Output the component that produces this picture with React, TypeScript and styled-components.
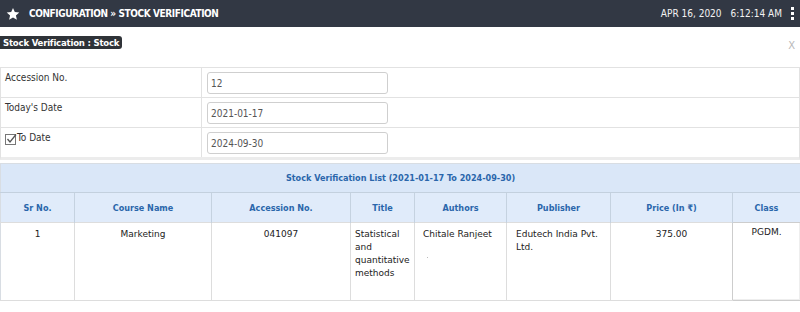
import * as React from 'react'
import styled, { createGlobalStyle } from 'styled-components'

const Global = createGlobalStyle`
  html, body {
    margin: 0;
    padding: 0;
    background: #fff;
  }
  body {
    font-family: "DejaVu Sans Condensed", "DejaVu Sans", sans-serif;
    color: #222;
  }
`

const TopBar = styled.div`
  display: flex;
  align-items: center;
  justify-content: space-between;
  height: 27px;
  background: #323844;
  color: #fff;
  padding: 0 6px 0 6px;
`

const Crumb = styled.div`
  display: flex;
  align-items: center;
  gap: 9px;
  font-weight: bold;
  font-size: 10px;
  letter-spacing: -0.4px;
  text-transform: uppercase;
`

const Clock = styled.div`
  display: flex;
  align-items: center;
  gap: 9px;
  font-family: "DejaVu Sans Condensed", sans-serif;
  font-size: 10px;
  color: #f2f2f2;
`

const Dots = styled.span`
  display: flex;
  flex-direction: column;
  gap: 2px;
  span {
    width: 3px;
    height: 3px;
    background: #fff;
  }
`

const TitleRow = styled.div`
  display: flex;
  justify-content: space-between;
  align-items: flex-start;
  padding: 9px 5px 0 0;
  height: 31px;
`

const Badge = styled.span`
  display: inline-block;
  background: #2f3338;
  color: #fff;
  font-weight: bold;
  font-size: 9.5px;
  letter-spacing: -0.2px;
  line-height: 13px;
  padding: 0 3px;
  border-radius: 0 3px 3px 0;
`

const Close = styled.span`
  font-family: "DejaVu Sans", sans-serif;
  font-size: 10px;
  color: #b8b8b8;
  margin-top: 4px;
`

const FormTable = styled.div`
  border: 1px solid #e2e2e2;
  border-bottom: 3px solid #ececec;
  margin-bottom: 3px;
`

const FormRow = styled.div`
  display: grid;
  grid-template-columns: 201px 1fr;
  height: 29px;
  & + & {
    border-top: 1px solid #e2e2e2;
  }
`

const Label = styled.div`
  display: flex;
  align-items: flex-start;
  padding: 4px 0 0 4px;
  font-size: 10px;
  color: #333;
  border-right: 1px solid #e2e2e2;
`

const Check = styled.span`
  display: inline-block;
  width: 9px;
  height: 9px;
  border: 1px solid #777;
  margin: 2px 1px 0 0;
  position: relative;
  svg {
    position: absolute;
    left: 0;
    top: -2px;
  }
`

const Field = styled.div`
  padding: 4px 0 0 5px;
`

const Input = styled.div`
  width: 176px;
  height: 20px;
  border: 1px solid #cfcfcf;
  border-radius: 3px;
  font-size: 10px;
  color: #555;
  line-height: 21px;
  padding-left: 3px;
  box-sizing: content-box;
`

const List = styled.table`
  width: 100%;
  border-collapse: collapse;
  table-layout: fixed;
  border: 1px solid #d8dde3;
`

const Caption = styled.th`
  background: #dae7f8;
  color: #2a66ab;
  font-size: 9px;
  font-weight: bold;
  height: 28px;
  padding: 0;
  border-bottom: 1px solid #c3d0de;
`

const Head = styled.th`
  background: #e0ebfa;
  color: #2a66ab;
  font-size: 9px;
  font-weight: bold;
  height: 29px;
  padding: 0;
  border-left: 1px solid #c5d2e0;
  &:first-child {
    border-left: none;
  }
`

const Cell = styled.td<{ $align?: string; $pad?: number }>`
  font-family: "DejaVu Sans", sans-serif;
  font-size: 9px;
  line-height: 13px;
  color: #222;
  height: 72px;
  vertical-align: top;
  text-align: ${p => p.$align || 'center'};
  padding: 5px ${p => (p.$align === 'left' ? 2 : 0)}px 0 ${p => p.$pad ?? 0}px;
  border-left: 1px solid #ddd;
  border-top: 1px solid #ddd;
  border-bottom: 1px solid #ddd;
  &:first-child {
    border-left: none;
  }
`

const ClassCell = styled(Cell)`
  padding-top: 3px;
  border: 1px solid #cdcdcd;
  box-shadow: inset -1px -1px 0 #eee;
`

const Speck = styled.span`
  display: block;
  margin: 16px 0 0 4px;
  width: 1px;
  height: 1px;
  background: #bbb;
`

const cols = [74, 137, 139, 64, 92, 104, 122, 68]

const Star = () => (
  <svg width="14" height="14" viewBox="0 0 24 24">
    <path
      fill="#fff"
      d="M12 1.5l3.1 7.1 7.7.7-5.8 5.1 1.7 7.6L12 18l-6.7 4 1.7-7.6-5.8-5.1 7.7-.7z"
    />
  </svg>
)

export default function App() {
  return (
    <>
      <Global />
      <TopBar>
        <Crumb>
          <Star />
          <span>Configuration » Stock Verification</span>
        </Crumb>
        <Clock>
          <span>APR 16, 2020</span>
          <span>6:12:14 AM</span>
          <Dots>
            <span />
            <span />
            <span />
          </Dots>
        </Clock>
      </TopBar>
      <TitleRow>
        <Badge>Stock Verification : Stock</Badge>
        <Close>X</Close>
      </TitleRow>
      <FormTable>
        <FormRow>
          <Label>Accession No.</Label>
          <Field>
            <Input>12</Input>
          </Field>
        </FormRow>
        <FormRow>
          <Label>Today's Date</Label>
          <Field>
            <Input>2021-01-17</Input>
          </Field>
        </FormRow>
        <FormRow>
          <Label>
            <Check>
              <svg width="11" height="11" viewBox="0 0 11 11">
                <path d="M1.5 6l2.5 3L10 1.5" stroke="#555" strokeWidth="1.3" fill="none" />
              </svg>
            </Check>
            To Date
          </Label>
          <Field>
            <Input>2024-09-30</Input>
          </Field>
        </FormRow>
      </FormTable>
      <List>
        <colgroup>
          {cols.map((w, i) => (
            <col key={i} style={{ width: w }} />
          ))}
        </colgroup>
        <thead>
          <tr>
            <Caption colSpan={8}>Stock Verification List (2021-01-17 To 2024-09-30)</Caption>
          </tr>
          <tr>
            <Head>Sr No.</Head>
            <Head>Course Name</Head>
            <Head>Accession No.</Head>
            <Head>Title</Head>
            <Head>Authors</Head>
            <Head>Publisher</Head>
            <Head>Price (In ₹)</Head>
            <Head>Class</Head>
          </tr>
        </thead>
        <tbody>
          <tr>
            <Cell>1</Cell>
            <Cell>Marketing</Cell>
            <Cell>041097</Cell>
            <Cell $align="left" $pad={4}>
              Statistical and quantitative methods
            </Cell>
            <Cell $align="left" $pad={8}>
              Chitale Ranjeet
              <Speck />
            </Cell>
            <Cell $align="left" $pad={9}>
              Edutech India Pvt. Ltd.
            </Cell>
            <Cell>375.00</Cell>
            <ClassCell>PGDM.</ClassCell>
          </tr>
        </tbody>
      </List>
    </>
  )
}
